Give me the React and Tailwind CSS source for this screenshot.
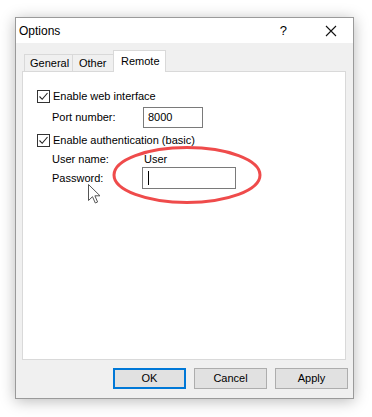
import React from "react";

function Check() {
  return (
    <div className="w-[13px] h-[13px] border border-[#333] bg-white flex items-center justify-center shrink-0">
      <svg width="11" height="11" viewBox="0 0 11 11">
        <path d="M1.5 5.5 L4.2 8.3 L9.5 2" fill="none" stroke="#222" strokeWidth="1.1" />
      </svg>
    </div>
  );
}

function Btn({ children, def }) {
  return (
    <div
      className={
        "w-[73px] h-[21px] flex items-center justify-center bg-[#e1e1e1] leading-none " +
        (def ? "border-2 border-[#0078d7]" : "border border-[#adadad]")
      }
    >
      {children}
    </div>
  );
}

export default function App() {
  return (
    <div
      className="w-[372px] h-[417px] bg-white pt-[17px] pl-[15px] text-[11px] text-black"
      style={{ fontFamily: '"Liberation Sans", Arial, sans-serif' }}
    >
      <div className="relative w-[339px] h-[382px] border border-[#9a9a9a] bg-[#f0f0f0] flex flex-col shadow-[0_2px_14px_rgba(0,0,0,0.28)]">
        {/* title bar */}
        <div className="h-[25px] bg-white flex items-center shrink-0">
          <span className="pl-[3px] leading-none text-[12px]">Options</span>
          <span className="ml-auto mr-[38px] leading-none text-[13px]">?</span>
          <svg width="12" height="12" viewBox="0 0 12 12" className="mr-[16px]">
            <path d="M1 1 L11 11 M11 1 L1 11" stroke="#111" strokeWidth="1.1" />
          </svg>
        </div>
        {/* body */}
        <div className="flex-1 flex flex-col pl-[6px] pr-[7px] pt-[7px]">
          {/* tabs */}
          <div className="flex items-end h-[21px] pl-[2px] relative z-10">
            <div className="w-[49px] h-[17px] border border-b-0 border-[#d9d9d9] flex items-center pl-[5px] leading-none">
              General
            </div>
            <div className="w-[41px] h-[17px] border border-b-0 border-l-0 border-[#d9d9d9] flex items-center pl-[6px] leading-none">
              Other
            </div>
            <div className="w-[53px] border border-b-0 border-[#d9d9d9] bg-white -ml-px -mb-px h-[22px] flex items-start pt-[5px] pl-[7px] leading-none">
              Remote
            </div>
          </div>
          {/* panel */}
          <div className="relative h-[289px] bg-white border border-[#d9d9d9] pl-[14px] pt-[18px]">
            <div className="flex items-center h-[13px]">
              <Check />
              <span className="ml-[3px] leading-none">Enable web interface</span>
            </div>
            <div className="flex items-center h-[21px] mt-[4px] pl-[15px]">
              <span className="w-[91px] leading-none">Port number:</span>
              <div className="w-[60px] h-[21px] border border-[#7a7a7a] bg-white flex items-center pl-[4px] leading-none">
                8000
              </div>
            </div>
            <div className="flex items-center h-[13px] mt-[6px]">
              <Check />
              <span className="ml-[3px] leading-none">Enable authentication (basic)</span>
            </div>
            <div className="flex items-center h-[13px] mt-[6px] pl-[15px]">
              <span className="w-[91px] leading-none">User name:</span>
              <span className="pl-[1px] leading-none">User</span>
            </div>
            <div className="flex items-center h-[22px] mt-[1px] pl-[15px]">
              <span className="w-[90px] leading-none">Password:</span>
              <div className="w-[94px] h-[22px] border border-[#7a7a7a] bg-white flex items-center pl-[5px]">
                <div className="w-px h-[14px] bg-black" />
              </div>
            </div>
            {/* red ellipse annotation */}
            <svg
              className="absolute left-[88px] top-[73px] pointer-events-none"
              width="152"
              height="60"
              viewBox="0 0 152 60"
            >
              <ellipse cx="76" cy="30" rx="73" ry="27.5" fill="none" stroke="#ef4b4b" strokeWidth="3" />
            </svg>
            {/* mouse cursor */}
            <svg
              className="absolute left-[65px] top-[112px] pointer-events-none"
              width="13"
              height="20"
              viewBox="0 0 13 20"
            >
              <path
                d="M0.5 0.5 L0.5 16.5 L4.5 12.7 L7.3 19 L9.6 18 L6.9 11.8 L12 11.8 Z"
                fill="white"
                stroke="#555"
                strokeWidth="1"
                strokeLinejoin="round"
              />
            </svg>
          </div>
          {/* buttons */}
          <div className="flex justify-end gap-[8px] mt-[8px] -mr-[2px]">
            <Btn def>OK</Btn>
            <Btn>Cancel</Btn>
            <Btn>Apply</Btn>
          </div>
        </div>
      </div>
    </div>
  );
}
